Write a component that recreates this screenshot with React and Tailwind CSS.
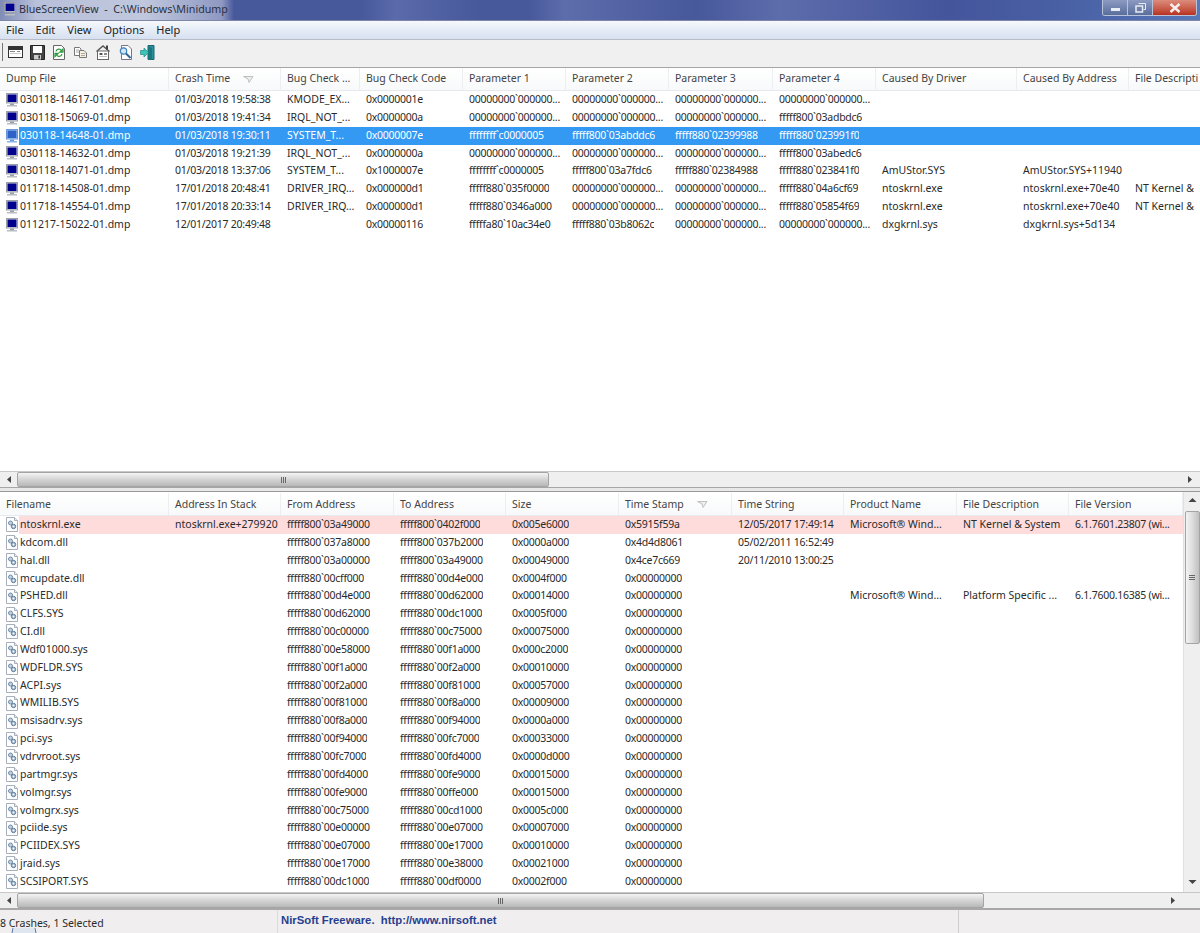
import React from "react";

const topHead = ["Dump File", "Crash Time", "Bug Check ...", "Bug Check Code", "Parameter 1", "Parameter 2", "Parameter 3", "Parameter 4", "Caused By Driver", "Caused By Address", "File Descripti"];
const bottomHead = ["Filename", "Address In Stack", "From Address", "To Address", "Size", "Time Stamp", "Time String", "Product Name", "File Description", "File Version"];

const z = "00000000`000000...";

const crashes = [
  ["030118-14617-01.dmp", "01/03/2018 19:58:38", "KMODE_EX...", "0x0000001e", z, z, z, z, "", "", ""],
  ["030118-15069-01.dmp", "01/03/2018 19:41:34", "IRQL_NOT_...", "0x0000000a", z, z, z, "fffff800`03adbdc6", "", "", ""],
  ["030118-14648-01.dmp", "01/03/2018 19:30:11", "SYSTEM_T...", "0x0000007e", "ffffffff`c0000005", "fffff800`03abddc6", "fffff880`02399988", "fffff880`023991f0", "", "", ""],
  ["030118-14632-01.dmp", "01/03/2018 19:21:39", "IRQL_NOT_...", "0x0000000a", z, z, z, "fffff800`03abedc6", "", "", ""],
  ["030118-14071-01.dmp", "01/03/2018 13:37:06", "SYSTEM_T...", "0x1000007e", "ffffffff`c0000005", "fffff800`03a7fdc6", "fffff880`02384988", "fffff880`023841f0", "AmUStor.SYS", "AmUStor.SYS+11940", ""],
  ["011718-14508-01.dmp", "17/01/2018 20:48:41", "DRIVER_IRQ...", "0x000000d1", "fffff880`035f0000", z, z, "fffff880`04a6cf69", "ntoskrnl.exe", "ntoskrnl.exe+70e40", "NT Kernel &"],
  ["011718-14554-01.dmp", "17/01/2018 20:33:14", "DRIVER_IRQ...", "0x000000d1", "fffff880`0346a000", z, z, "fffff880`05854f69", "ntoskrnl.exe", "ntoskrnl.exe+70e40", "NT Kernel &"],
  ["011217-15022-01.dmp", "12/01/2017 20:49:48", "", "0x00000116", "fffffa80`10ac34e0", "fffff880`03b8062c", z, z, "dxgkrnl.sys", "dxgkrnl.sys+5d134", ""],
];

const zero = "0x00000000";

const drivers = [
  ["ntoskrnl.exe", "ntoskrnl.exe+279920", "fffff800`03a49000", "fffff800`0402f000", "0x005e6000", "0x5915f59a", "12/05/2017 17:49:14", "Microsoft® Wind...", "NT Kernel & System", "6.1.7601.23807 (wi..."],
  ["kdcom.dll", "", "fffff800`037a8000", "fffff800`037b2000", "0x0000a000", "0x4d4d8061", "05/02/2011 16:52:49", "", "", ""],
  ["hal.dll", "", "fffff800`03a00000", "fffff800`03a49000", "0x00049000", "0x4ce7c669", "20/11/2010 13:00:25", "", "", ""],
  ["mcupdate.dll", "", "fffff880`00cff000", "fffff880`00d4e000", "0x0004f000", zero, "", "", "", ""],
  ["PSHED.dll", "", "fffff880`00d4e000", "fffff880`00d62000", "0x00014000", zero, "", "Microsoft® Wind...", "Platform Specific ...", "6.1.7600.16385 (wi..."],
  ["CLFS.SYS", "", "fffff880`00d62000", "fffff880`00dc1000", "0x0005f000", zero, "", "", "", ""],
  ["CI.dll", "", "fffff880`00c00000", "fffff880`00c75000", "0x00075000", zero, "", "", "", ""],
  ["Wdf01000.sys", "", "fffff880`00e58000", "fffff880`00f1a000", "0x000c2000", zero, "", "", "", ""],
  ["WDFLDR.SYS", "", "fffff880`00f1a000", "fffff880`00f2a000", "0x00010000", zero, "", "", "", ""],
  ["ACPI.sys", "", "fffff880`00f2a000", "fffff880`00f81000", "0x00057000", zero, "", "", "", ""],
  ["WMILIB.SYS", "", "fffff880`00f81000", "fffff880`00f8a000", "0x00009000", zero, "", "", "", ""],
  ["msisadrv.sys", "", "fffff880`00f8a000", "fffff880`00f94000", "0x0000a000", zero, "", "", "", ""],
  ["pci.sys", "", "fffff880`00f94000", "fffff880`00fc7000", "0x00033000", zero, "", "", "", ""],
  ["vdrvroot.sys", "", "fffff880`00fc7000", "fffff880`00fd4000", "0x0000d000", zero, "", "", "", ""],
  ["partmgr.sys", "", "fffff880`00fd4000", "fffff880`00fe9000", "0x00015000", zero, "", "", "", ""],
  ["volmgr.sys", "", "fffff880`00fe9000", "fffff880`00ffe000", "0x00015000", zero, "", "", "", ""],
  ["volmgrx.sys", "", "fffff880`00c75000", "fffff880`00cd1000", "0x0005c000", zero, "", "", "", ""],
  ["pciide.sys", "", "fffff880`00e00000", "fffff880`00e07000", "0x00007000", zero, "", "", "", ""],
  ["PCIIDEX.SYS", "", "fffff880`00e07000", "fffff880`00e17000", "0x00010000", zero, "", "", "", ""],
  ["jraid.sys", "", "fffff880`00e17000", "fffff880`00e38000", "0x00021000", zero, "", "", "", ""],
  ["SCSIPORT.SYS", "", "fffff880`00dc1000", "fffff880`00df0000", "0x0002f000", zero, "", "", "", ""],
  ["", "", "", "", "", "", "", "", "", ""],
];

const topCols = "grid-cols-[169px_112px_79px_103px_103px_103px_104px_103px_141px_112px_72px]";
const bottomCols = "grid-cols-[169px_112px_113px_112px_113px_113px_112px_113px_112px_114px]";

// tahoma digits are narrower than noto's
const isNumeric = (v) => /^(0x|[0-9a-f]{8}`|\d\d\/|\d\.\d)/.test(v);

const MonitorIcon = ({ selected }) => (
  <svg width="14" height="14" viewBox="0 0 14 14" className="shrink-0">
    <rect x="1.5" y="0.5" width="11" height="9.5" fill={selected ? "#a8ccf2" : "#d4d8e0"} stroke={selected ? "#6a9ada" : "#9a9ea8"} />
    <rect x="2.5" y="1.5" width="9" height="7.5" fill={selected ? "#2f62c6" : "#00008c"} />
    <rect x="5" y="10.5" width="4" height="1.5" fill={selected ? "#6a9ce0" : "#9a9ea6"} />
    <rect x="2" y="12" width="10" height="1.5" fill={selected ? "#8ab4e6" : "#b8bcc4"} />
  </svg>
);

const DriverIcon = () => (
  <svg width="14" height="15" viewBox="0 0 14 15" className="shrink-0">
    <path d="M1.5 0.5H9.5L12.5 3.5V14.5H1.5Z" fill="#fff" stroke="#a6afbb" />
    <path d="M9.5 0.5V3.5H12.5" fill="#e8ecf2" stroke="#a6afbb" />
    <circle cx="5.5" cy="6" r="2" fill="#c4d2e0" stroke="#6f8ca8" />
    <circle cx="8.5" cy="9.5" r="2.2" fill="#b4c6d8" stroke="#5c7c9a" />
    <circle cx="8.5" cy="9.5" r="0.7" fill="#fff" />
  </svg>
);

const SortArrow = () => (
  <svg width="11" height="7" viewBox="0 0 11 7" className="ml-[13px] shrink-0">
    <path d="M0.5 0.5H10L6 6.5L5 3Z" fill="#eeeeee" stroke="#c0c0c0" />
  </svg>
);

const Header = ({ cols, items, sorted, className }) => (
  <div className={`grid ${cols} h-[23px] shrink-0 border-b border-[#e6e9ed] bg-gradient-to-b from-white to-[#f8f9fa]`}>
    {items.map((h, i) => (
      <div key={h} className={`flex items-center pl-[6px] whitespace-nowrap overflow-hidden border-r border-[#eceef1] text-[#444] ${className}`}>
        {h}
        {i === sorted && <SortArrow />}
      </div>
    ))}
  </div>
);

const Cell = ({ children }) => (
  <div className={`pl-[6px] whitespace-nowrap overflow-hidden ${isNumeric(children) ? "tracking-[-0.25px]" : ""}`}>{children}</div>
);

const CrashRow = ({ row, selected }) => (
  <div className={`grid ${topCols} h-[17.85px] items-center ${selected ? "text-white" : ""}`}>
    <div className="flex items-center pl-[5px] h-full">
      <MonitorIcon selected={selected} />
      <span className={`flex-1 h-full pl-[1px] flex items-center whitespace-nowrap ${selected ? "bg-[#3399f3]" : ""}`}>{row[0]}</span>
    </div>
    {row.slice(1).map((v, i) => (
      <div key={i} className={`h-full flex items-center ${selected ? "bg-[#3399f3]" : ""}`}>
        <Cell>{v}</Cell>
      </div>
    ))}
  </div>
);

const DriverRow = ({ row, hot }) => (
  <div className={`grid ${bottomCols} h-[17.85px] items-center`}>
    <div className="flex items-center pl-[5px] h-full">
      <DriverIcon />
      <span className={`flex-1 h-full pl-[1px] flex items-center whitespace-nowrap ${hot ? "bg-[#ffdcdc]" : ""}`}>{row[0]}</span>
    </div>
    {row.slice(1).map((v, i) => (
      <div key={i} className={`h-full flex items-center ${hot ? "bg-[#ffdcdc]" : ""}`}>
        <Cell>{v}</Cell>
      </div>
    ))}
  </div>
);

const Arrow = ({ dir }) => {
  const d = {
    left: "M5 1L1 4.5L5 8Z",
    right: "M1 1L5 4.5L1 8Z",
    up: "M0.5 5L4.5 1L8.5 5Z",
    down: "M0.5 1L4.5 5L8.5 1Z",
  }[dir];
  return (
    <svg width="9" height="9" viewBox="0 0 9 9">
      <path d={d} fill="#444" />
    </svg>
  );
};

const HScroll = ({ thumb }) => (
  <div className="flex items-center h-[16px] shrink-0 bg-[#efefef] border-t border-[#c8c8c8]">
    <div className="w-[17px] flex justify-center pl-[3px]"><Arrow dir="left" /></div>
    <div className={`${thumb} h-[15px] flex items-center justify-center rounded-[2px] border border-[#a4a4a4] bg-gradient-to-b from-[#f4f4f4] via-[#d4d4d4] to-[#b8b8b8]`}>
      <div className="flex gap-[1px]">
        <span className="w-px h-[6px] bg-[#666]" />
        <span className="w-px h-[6px] bg-[#666]" />
        <span className="w-px h-[6px] bg-[#666]" />
      </div>
    </div>
    <div className="flex-1" />
    <div className="w-[17px] flex justify-center"><Arrow dir="right" /></div>
  </div>
);

const VScroll = () => (
  <div className="w-[17px] shrink-0 flex flex-col items-center bg-[#efefef] border-l border-[#e0e0e0]">
    <div className="h-[19px] flex items-center justify-center"><Arrow dir="up" /></div>
    <div className="w-[15px] h-[133px] flex flex-col items-center justify-center gap-[1px] rounded-[2px] border border-[#a4a4a4] bg-gradient-to-r from-[#f4f4f4] via-[#dcdcdc] to-[#c0c0c0]">
      <span className="h-px w-[6px] bg-[#666]" />
      <span className="h-px w-[6px] bg-[#666]" />
      <span className="h-px w-[6px] bg-[#666]" />
    </div>
    <div className="flex-1" />
    <div className="h-[17px] flex items-center justify-center"><Arrow dir="down" /></div>
  </div>
);

const ToolIcons = () => (
  <div className="flex items-center gap-[7px] pl-[8px]">
    <svg width="15" height="14" viewBox="0 0 15 14">
      <rect x="0.5" y="1.5" width="14" height="11" fill="#fff" stroke="#333" />
      <rect x="1" y="2" width="13" height="3" fill="#333" />
      <rect x="2" y="6" width="5" height="1" fill="#888" />
      <rect x="9" y="6" width="3" height="1" fill="#888" />
      <rect x="2" y="8" width="11" height="1" fill="#ccc" />
    </svg>
    <svg width="15" height="15" viewBox="0 0 15 15">
      <path d="M0.5 0.5H14.5V14.5H0.5Z" fill="#444" stroke="#222" />
      <rect x="3" y="1" width="9" height="7" fill="#fff" />
      <rect x="4" y="10" width="7" height="4.5" fill="#ccc" />
      <rect x="8.5" y="10.5" width="1.5" height="3" fill="#333" />
    </svg>
    <svg width="14" height="15" viewBox="0 0 14 15">
      <path d="M1.5 0.5H9.5L12.5 3.5V14.5H1.5Z" fill="#fff" stroke="#666" />
      <path d="M4 6.5A3 3 0 0 1 9.5 5.5L8 7H11V4L10 5" fill="none" stroke="#2d9a3d" strokeWidth="1.3" />
      <path d="M10 9A3 3 0 0 1 4.5 10L6 8.5H3V11.5L4 10.5" fill="none" stroke="#2d9a3d" strokeWidth="1.3" />
    </svg>
    <svg width="15" height="14" viewBox="0 0 15 14">
      <path d="M1.5 2.5H6.5L8 4V10.5H1.5Z" fill="#fff" stroke="#777" />
      <path d="M6.5 5.5H11L13.5 8V12.5H6.5Z" fill="#f6f0dc" stroke="#777" />
      <path d="M3 5H6M3 7H6M8 8.5H12M8 10.5H12" stroke="#aaa" />
    </svg>
    <svg width="16" height="15" viewBox="0 0 16 15">
      <path d="M1.5 6.5L8 1L14.5 6.5" fill="none" stroke="#555" strokeWidth="1.4" />
      <rect x="2.5" y="6" width="11" height="8.5" fill="#fff" stroke="#666" />
      <rect x="4.5" y="8" width="3" height="2" fill="#555" />
      <rect x="9" y="8" width="3" height="2" fill="#888" />
      <rect x="4.5" y="11" width="7.5" height="1" fill="#bbb" />
      <rect x="11" y="0.5" width="2" height="4" fill="#444" />
    </svg>
    <svg width="15" height="15" viewBox="0 0 15 15">
      <path d="M3.5 0.5H10L13.5 4V14.5H3.5Z" fill="#fff" stroke="#778" />
      <circle cx="5.5" cy="6" r="3.2" fill="#cfe8f8" stroke="#3f7fb8" strokeWidth="1.2" />
      <path d="M8 8.5L12.5 13" stroke="#2f659a" strokeWidth="2" />
    </svg>
    <svg width="15" height="15" viewBox="0 0 15 15">
      <path d="M8 0.5H14V14.5H8Z" fill="#2a8f98" stroke="#1c666e" />
      <path d="M8 1L12 3V14.5L8 14.5Z" fill="#1c7680" />
      <path d="M0.5 5.5H4V3L8.5 7.5L4 12V9.5H0.5Z" fill="#3cc4b4" stroke="#208a88" strokeWidth="0.7" />
    </svg>
  </div>
);

export default function App() {
  return (
    <div className="relative h-[933px] w-[1200px] flex flex-col overflow-hidden bg-[#f0f0f0] text-[#2a2a2a] text-[10.5px] font-['Noto_Sans',sans-serif]">
      {/* title bar */}
      <div className="flex items-start h-[21px] shrink-0 border-b border-[#7f86a8] bg-[linear-gradient(90deg,#7f8cb4_0%,#b8c0da_3%,#c0c8de_12%,#8e98c2_18.5%,#47589b_19.5%,#47589b_30%,#5a6aaa_33%,#47589b_40%,#47589b_44%,#5d6cab_47%,#47589b_58%,#5d6cab_65%,#44559c_79%,#4a62a6_90%,#5878b8_100%)]">
        <div className="flex items-center pl-[3px] h-[18px] gap-[2px] flex-1 text-[#2b3040] text-[10.7px]">
          <MonitorIcon />
          <span className="whitespace-pre">BlueScreenView  -  C:\Windows\Minidump</span>
        </div>
        <div className="flex h-[16px] mr-[3px] rounded-b-[3px] overflow-hidden border border-t-0 border-[#b8c2da]">
          <div className="w-[25px] flex items-center justify-center bg-gradient-to-b from-[#8c9ac0] to-[#5a6e9c] border-r border-[#b8c2da]">
            <span className="w-[9px] h-[3px] mt-[4px] bg-[#e8ecf4]" />
          </div>
          <div className="w-[25px] flex items-center justify-center bg-gradient-to-b from-[#8c9ac0] to-[#5a6e9c] border-r border-[#b8c2da]">
            <svg width="11" height="10" viewBox="0 0 11 10">
              <path d="M3.5 0.5H10.5V6.5H8.5" fill="none" stroke="#e8ecf4" />
              <rect x="1" y="3" width="6.5" height="6" fill="none" stroke="#e8ecf4" strokeWidth="1.5" />
            </svg>
          </div>
          <div className="w-[43px] flex items-center justify-center bg-gradient-to-b from-[#dc8c7c] to-[#b83020]">
            <svg width="12" height="10" viewBox="0 0 12 10">
              <path d="M1.5 1L10.5 9M10.5 1L1.5 9" stroke="#f8f0ee" strokeWidth="2.4" />
            </svg>
          </div>
        </div>
      </div>

      {/* menu */}
      <div className="flex items-center gap-[12px] h-[19px] shrink-0 pl-[6px] text-[11px] text-[#222] bg-gradient-to-b from-[#f6f9fd] to-[#d6e0f0] border-b border-[#b8bcc4]">
        <span>File</span>
        <span>Edit</span>
        <span>View</span>
        <span>Options</span>
        <span>Help</span>
      </div>

      {/* toolbar */}
      <div className="flex items-center h-[27px] shrink-0 pb-[3px]">
        <span className="w-px h-[18px] ml-[2px] -mr-[3px] bg-[#777]" />
        <ToolIcons />
      </div>

      {/* crashes */}
      <div className="h-[420px] shrink-0 flex flex-col border-t border-[#a6a6a6] bg-white">
        <Header cols={topCols} items={topHead} sorted={1} />
        <div className="flex-1 overflow-hidden">
          {crashes.map((r, i) => (
            <CrashRow key={r[0]} row={r} selected={i === 2} />
          ))}
        </div>
        <HScroll thumb="w-[532px]" />
      </div>

      <div className="h-[4px] shrink-0 bg-[#e8e8e8] border-t border-[#a6a6a6]" />

      {/* loaded drivers */}
      <div className="h-[417px] shrink-0 flex flex-col border-t border-[#9a9a9a] bg-white">
        <div className="flex flex-1 min-h-0">
          <div className="flex-1 min-w-0 flex flex-col overflow-hidden">
            <div className="pt-[1px] shrink-0">
              <Header cols={bottomCols} items={bottomHead} sorted={5} className="pt-[1px]" />
            </div>
            <div className="flex-1 overflow-hidden">
              {drivers.map((r, i) => (
                <DriverRow key={i} row={r} hot={i === 0} />
              ))}
            </div>
          </div>
          <VScroll />
        </div>
        <div className="flex shrink-0">
          <div className="flex-1 min-w-0"><HScroll thumb="w-[967px]" /></div>
          <div className="w-[17px] bg-[#efefef] border-t border-[#c8c8c8]" />
        </div>
      </div>

      {/* status bar */}
      <div className="flex-1 flex items-start border-t-2 border-[#a8a8a8] bg-[#f0eeee]">
        <div className="w-[278px] h-full pt-[6px] border-r border-[#dcdada] whitespace-nowrap">8 Crashes, 1 Selected</div>
        <div className="w-[681px] h-full pl-[3px] pt-[2px] border-r border-[#cfcdcd] text-[#27408f] text-[11.3px] font-bold font-['Liberation_Sans',sans-serif] whitespace-pre">NirSoft Freeware.  http://www.nirsoft.net</div>
      </div>

      {/* edge of the start orb showing through at the very bottom */}
      <svg width="26" height="5" viewBox="0 0 26 5" className="absolute left-[11px] bottom-0">
        <path d="M1 5A12 12 0 0 1 25 5" fill="#dfe6ef" stroke="#5b78a8" />
      </svg>
    </div>
  );
}
